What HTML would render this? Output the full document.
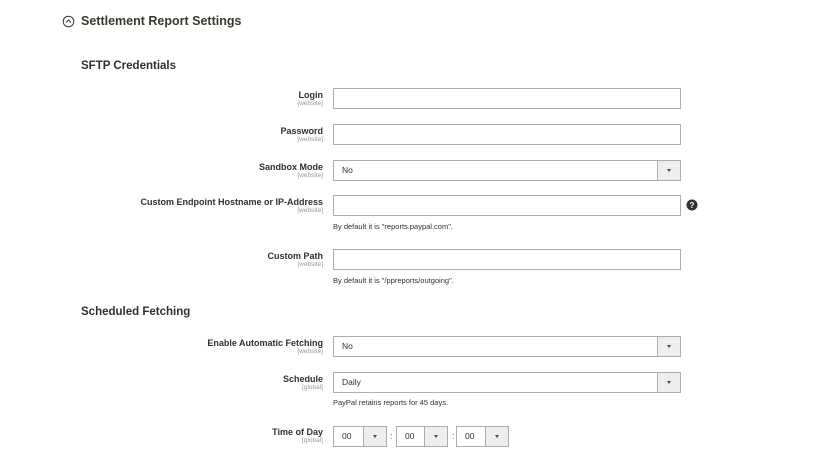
<!DOCTYPE html>
<html><head><style>
*{margin:0;padding:0;box-sizing:border-box}
body{width:818px;height:472px;background:#fff;font-family:"Liberation Sans",sans-serif;color:#303030;position:relative;overflow:hidden}
.a{position:absolute}
.h1{left:81px;top:14px;font-size:12.5px;font-weight:bold;color:#41362f}
.h2{left:81px;top:60px;font-size:11.5px;font-weight:bold;color:#303030}
.lab{right:495px;text-align:right;font-size:9px;font-weight:bold;line-height:10px;color:#303030}
.lab span{display:block;font-size:6.5px;font-weight:normal;color:#999;line-height:8px}
.in{left:333px;width:348px;height:21px;border:1px solid #adadad;background:#fff}
.sel{font-size:8.5px;line-height:19px;padding-left:8px;color:#303030}
.arr{position:absolute;right:0;top:0;width:23px;height:19px;background:#eeeeee;border-left:1px solid #adadad}
.arr:after{content:"";position:absolute;left:9px;top:8px;border-left:2.5px solid transparent;border-right:2.5px solid transparent;border-top:3px solid #514943}
.note{left:333px;font-size:7.5px;color:#303030}
.t{height:21px;border:1px solid #adadad;font-size:8.5px;line-height:19px;padding-left:8px}
.c{font-size:9px;color:#666}
</style></head><body>
<svg class="a" style="left:62px;top:15px" width="13" height="13" viewBox="0 0 13 13"><circle cx="6.5" cy="6.5" r="5.3" fill="none" stroke="#41362f" stroke-width="1"/><path d="M4 7.5 L6.5 5 L9 7.5" fill="none" stroke="#41362f" stroke-width="1"/></svg>
<div class="a h1">Settlement Report Settings</div>
<div class="a h2">SFTP Credentials</div>

<div class="a lab" style="top:90px">Login<span>[website]</span></div>
<div class="a in" style="top:88px"></div>
<div class="a lab" style="top:126px">Password<span>[website]</span></div>
<div class="a in" style="top:124px"></div>
<div class="a lab" style="top:162px">Sandbox Mode<span>[website]</span></div>
<div class="a in sel" style="top:160px">No<div class="arr"></div></div>
<div class="a lab" style="top:197px">Custom Endpoint Hostname or IP-Address<span>[website]</span></div>
<div class="a in" style="top:195px"></div>
<svg class="a" style="left:686px;top:199px" width="12" height="12" viewBox="0 0 12 12"><circle cx="6" cy="6" r="5.5" fill="#303030"/><text x="6" y="9" font-size="8" font-weight="bold" fill="#fff" text-anchor="middle" font-family="Liberation Sans">?</text></svg>
<div class="a note" style="top:222px">By default it is "reports.paypal.com".</div>
<div class="a lab" style="top:251px">Custom Path<span>[website]</span></div>
<div class="a in" style="top:249px"></div>
<div class="a note" style="top:276px">By default it is "/ppreports/outgoing".</div>

<div class="a h2" style="top:306px">Scheduled Fetching</div>
<div class="a lab" style="top:338px">Enable Automatic Fetching<span>[website]</span></div>
<div class="a in sel" style="top:336px">No<div class="arr"></div></div>
<div class="a lab" style="top:374px">Schedule<span>[global]</span></div>
<div class="a in sel" style="top:372px">Daily<div class="arr"></div></div>
<div class="a note" style="top:398px">PayPal retains reports for 45 days.</div>
<div class="a lab" style="top:427px">Time of Day<span>[global]</span></div>
<div class="a t" style="left:333px;top:426px;width:54px">00<div class="arr"></div></div>
<div class="a c" style="left:390px;top:431px">:</div>
<div class="a t" style="left:396px;top:426px;width:52px">00<div class="arr"></div></div>
<div class="a c" style="left:452px;top:431px">:</div>
<div class="a t" style="left:456px;top:426px;width:53px">00<div class="arr"></div></div>
</body></html>
